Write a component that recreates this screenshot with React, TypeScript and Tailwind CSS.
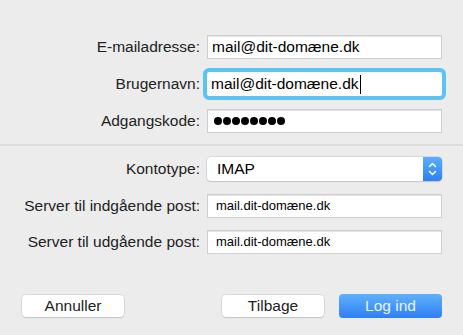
import React from "react";

const font = { fontFamily: '"Liberation Sans", Arial, sans-serif' };

function Label({ children }: { children: React.ReactNode }) {
  return (
    <div className="text-right text-[15.5px] text-[#222] leading-none whitespace-nowrap">{children}</div>
  );
}

function Field({ children, small }: { children?: React.ReactNode; small?: boolean }) {
  return (
    <div
      className={`h-[24px] bg-white border border-[#cfcfcf] shadow-[inset_0_1px_0_#e4e4e4] flex items-center text-black ${
        small ? "pl-[8px] text-[13px]" : "pl-[4px] text-[15.5px]"
      }`}
    >
      {children}
    </div>
  );
}

export default function App() {
  return (
    <div className="w-[463px] h-[335px] bg-[#ececec] flex flex-col overflow-hidden" style={font}>
      <div className="pt-[35px] grid grid-cols-[200px_235px] gap-x-[7px] gap-y-[13px] items-center">
        <Label>E-mailadresse:</Label>
        <Field>mail@dit-domæne.dk</Field>
        <Label>Brugernavn:</Label>
        <div className="h-[24px] bg-white rounded-[2px] outline-[4px] outline-solid outline-[#5cc4f4] flex items-center pl-[4px] text-[15.5px] text-black">
          mail@dit-domæne.dk
          <span className="inline-block w-[1px] h-[19px] bg-black ml-[1px]" />
        </div>
        <Label>Adgangskode:</Label>
        <Field>
          <div className="flex gap-[1px] pl-[2px]">
            {Array.from({ length: 8 }).map((_, i) => (
              <span key={i} className="w-[8px] h-[8px] rounded-full bg-black" />
            ))}
          </div>
        </Field>
      </div>

      <div className="mt-[11px] h-[2px] bg-[#dddddd]" />

      <div className="mt-[11px] grid grid-cols-[200px_235px] gap-x-[7px] gap-y-[12.5px] items-center">
        <Label>Kontotype:</Label>
        <div className="h-[24px] bg-white rounded-[4px] shadow-[0_0_0_0.5px_#c4c4c4,0_1px_1px_#c8c8c8] flex items-center justify-between">
          <span className="pl-[10px] text-[15.5px] text-black">IMAP</span>
          <div className="w-[19px] h-[24px] rounded-r-[4px] bg-gradient-to-b from-[#5aaeff] to-[#2f7ef6] flex items-center justify-center">
            <svg width="11" height="16" viewBox="0 0 11 16" fill="none" stroke="white" strokeWidth="1.6" strokeLinecap="round" strokeLinejoin="round">
              <path d="M2.5 5.5 L5.5 2.5 L8.5 5.5" />
              <path d="M2.5 10.5 L5.5 13.5 L8.5 10.5" />
            </svg>
          </div>
        </div>
        <Label>Server til indgående post:</Label>
        <Field small>mail.dit-domæne.dk</Field>
        <Label>Server til udgående post:</Label>
        <Field small>mail.dit-domæne.dk</Field>
      </div>

      <div className="mt-[40px] flex items-center pl-[22px] pr-[21px] h-[24px]">
        <button className="w-[102px] h-[22px] bg-white rounded-[4px] shadow-[0_0_0_0.5px_#c8c8c8,0_1px_1px_#c4c4c4] text-[15.5px] text-[#222] leading-none">
          Annuller
        </button>
        <button className="ml-auto w-[102px] h-[22px] bg-white rounded-[4px] shadow-[0_0_0_0.5px_#c8c8c8,0_1px_1px_#c4c4c4] text-[15.5px] text-[#222] leading-none">
          Tilbage
        </button>
        <button className="ml-[15px] w-[103px] h-[24px] rounded-[4px] bg-gradient-to-b from-[#5fb0fb] to-[#2f7ff7] text-[15.5px] text-[#eaf4ff] leading-none">
          Log ind
        </button>
      </div>
    </div>
  );
}
